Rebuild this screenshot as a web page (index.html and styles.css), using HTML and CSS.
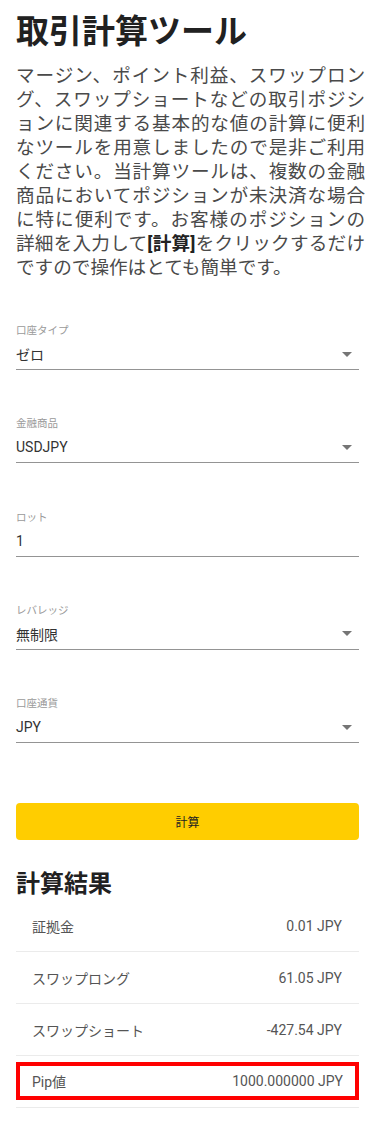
FILE: index.html
```html
<!DOCTYPE html>
<html lang="ja">
<head>
<meta charset="utf-8">
<meta name="viewport" content="width=device-width, initial-scale=1">
<title>取引計算ツール</title>
<link rel="stylesheet" href="styles.css">
</head>
<body>
<main class="page">
  <h1 class="title">取引計算ツール</h1>
  <p class="intro">マージン、ポイント利益、スワップロング、スワップショートなどの取引ポジションに関連する基本的な値の計算に便利なツールを用意しましたので是非ご利用ください。当計算ツールは、複数の金融商品においてポジションが未決済な場合に特に便利です。お客様のポジションの詳細を入力して<strong>[計算]</strong>をクリックするだけですので操作はとても簡単です。</p>

  <form class="calc">
    <div class="field">
      <div class="field-label">口座タイプ</div>
      <div class="select"><span class="value">ゼロ</span><span class="arrow"></span></div>
    </div>
    <div class="field">
      <div class="field-label">金融商品</div>
      <div class="select"><span class="value">USDJPY</span><span class="arrow"></span></div>
    </div>
    <div class="field">
      <div class="field-label">ロット</div>
      <div class="select"><span class="value">1</span></div>
    </div>
    <div class="field">
      <div class="field-label">レバレッジ</div>
      <div class="select"><span class="value">無制限</span><span class="arrow"></span></div>
    </div>
    <div class="field">
      <div class="field-label">口座通貨</div>
      <div class="select"><span class="value">JPY</span><span class="arrow"></span></div>
    </div>
    <button type="button" class="calc-btn">計算</button>
  </form>

  <section class="results">
    <h2 class="results-title">計算結果</h2>
    <ul class="result-list">
      <li class="result-row"><span>証拠金</span><span>0.01 JPY</span></li>
      <li class="result-row"><span>スワップロング</span><span>61.05 JPY</span></li>
      <li class="result-row"><span>スワップショート</span><span>-427.54 JPY</span></li>
      <li class="result-row result-row--marked"><div class="highlight"><span>Pip値</span><span>1000.000000 JPY</span></div></li>
    </ul>
  </section>
</main>
</body>
</html>
```
FILE: styles.css
```css
html, body {
  margin: 0;
  padding: 0;
  background: #ffffff;
}

body {
  font-family: Roboto, "Noto Sans CJK JP", "Noto Sans", sans-serif;
  color: #333333;
}

.page {
  padding: 0 16px 20px;
}

.title {
  margin: 0;
  padding-top: 12px;
  font-size: 33px;
  line-height: 40px;
  font-weight: 700;
  color: #212121;
}

.intro {
  margin: 12px -6px 0 0;
  font-size: 18.6px;
  line-height: 24px;
  color: #4a4a4a;
  text-align: justify;
}

.intro strong {
  font-weight: 700;
  color: #222222;
}

.calc {
  margin-top: 43px;
  display: flex;
  flex-direction: column;
}

.field + .field {
  margin-top: 46.25px;
}

.field-label {
  font-size: 10.5px;
  line-height: 16px;
  color: #9a9a9a;
}

.select {
  height: 30px;
  border-bottom: 1px solid #949494;
  display: flex;
  align-items: center;
}

.value {
  font-size: 14px;
  color: #333333;
}

.arrow {
  margin-left: auto;
  margin-right: 7px;
  width: 0;
  height: 0;
  border-left: 5px solid transparent;
  border-right: 5px solid transparent;
  border-top: 5px solid #757575;
}

.calc-btn {
  margin-top: 60px;
  height: 37px;
  width: 100%;
  border: 0;
  border-radius: 4px;
  background: #ffcd00;
  color: #222222;
  font-family: Roboto, "Noto Sans CJK JP", sans-serif;
  font-size: 12px;
  padding: 0;
}

.results-title {
  margin: 28px 0 0;
  font-size: 24px;
  line-height: 32px;
  font-weight: 700;
  color: #212121;
}

.result-list {
  list-style: none;
  margin: 0;
  padding: 0;
}

.result-row {
  height: 51px;
  border-bottom: 1px solid #ebebeb;
  display: flex;
  align-items: center;
  justify-content: space-between;
  padding: 0 17px 0 16px;
  font-size: 14px;
  color: #555555;
}

.result-row--marked {
  padding: 6px 0 7px;
  height: 38px;
}

.highlight {
  box-sizing: border-box;
  width: 100%;
  height: 38px;
  border: 4px solid #ff0000;
  display: flex;
  align-items: center;
  justify-content: space-between;
  padding: 0 12px;
}
```
